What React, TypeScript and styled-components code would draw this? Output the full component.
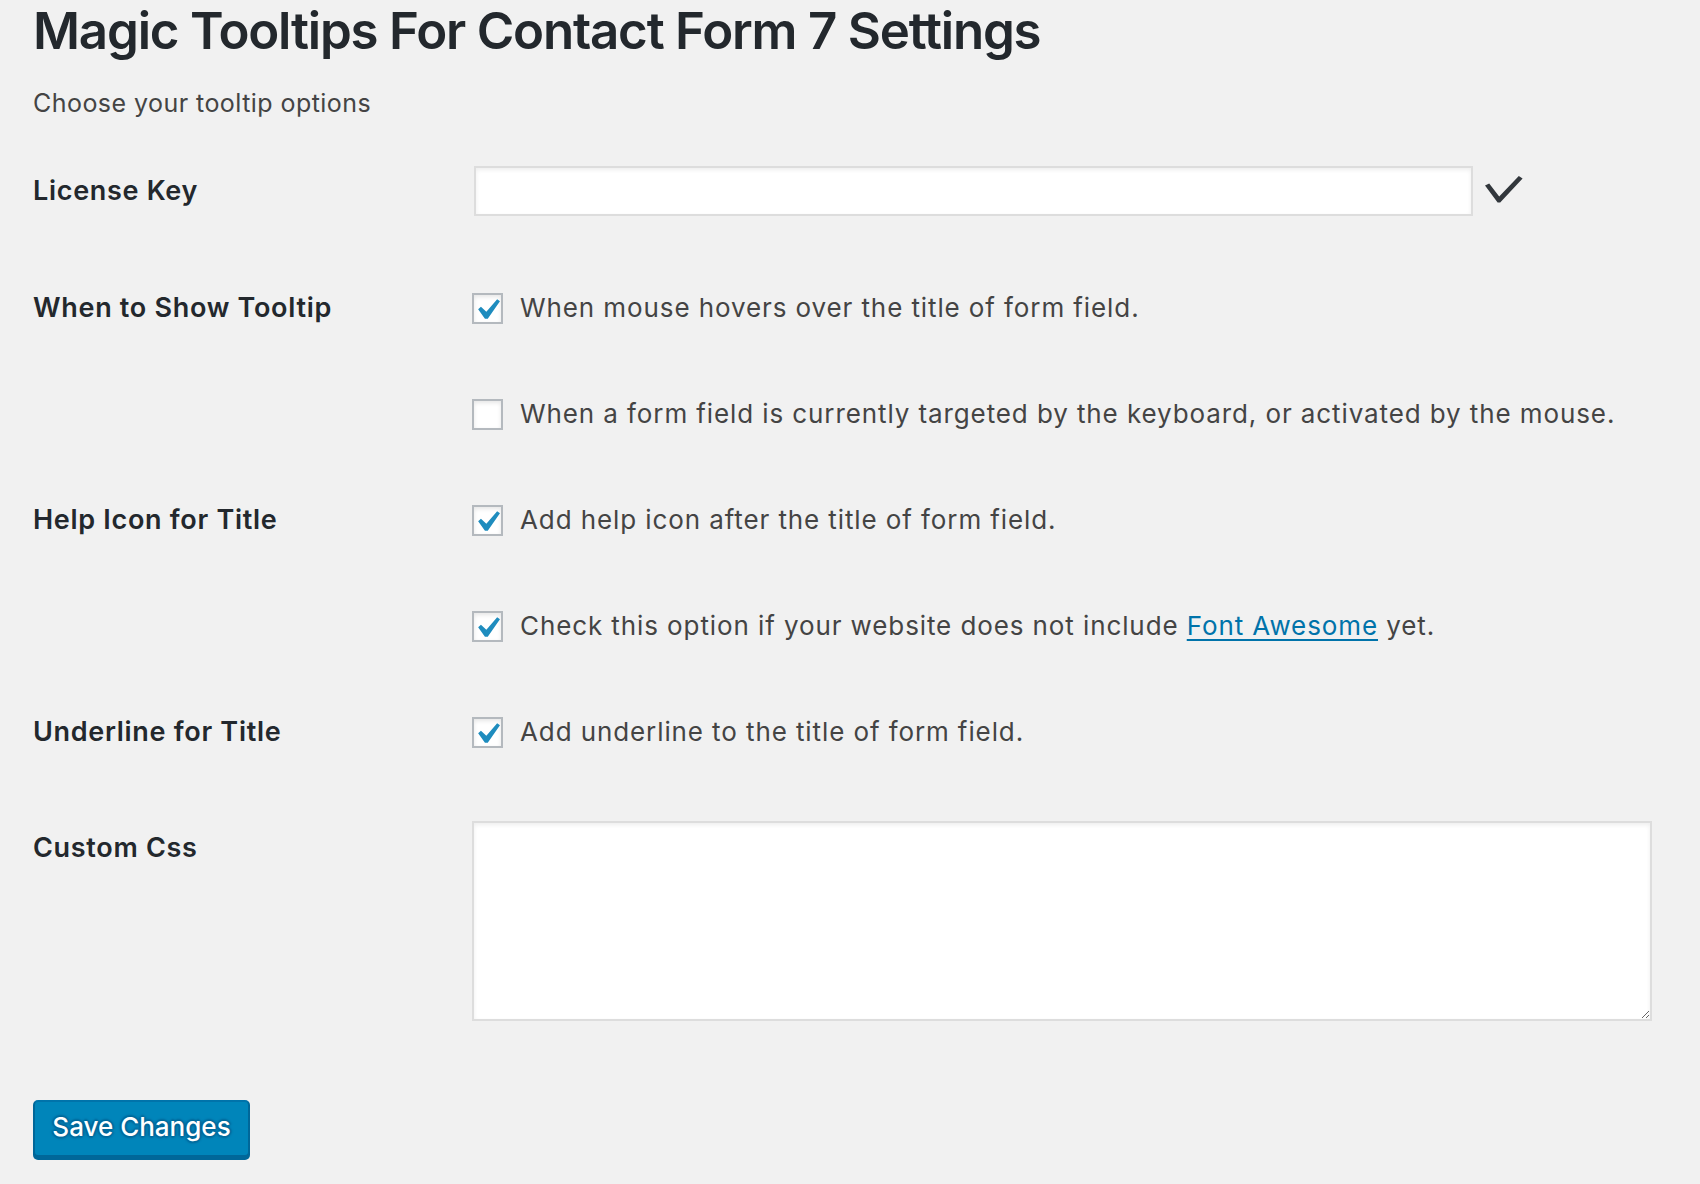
import styled, { createGlobalStyle } from 'styled-components'

// ─── Styles ───────────────────────────────────────────────────────────────────

const GlobalStyle = createGlobalStyle`
  html, body {
    margin: 0;
    padding: 0;
    background: #f1f1f1;
  }
  body {
    font-family: Inter, "Noto Sans", sans-serif;
    color: #444;
  }
`

const Wrap = styled.div`
  padding: 0 48px 40px 33px;
`

const Title = styled.h1`
  margin: 0;
  font-size: 51px;
  line-height: 62px;
  font-weight: 600;
  letter-spacing: -1.2px;
  color: #23282d;
`

const Description = styled.p`
  margin: 21px 0 0;
  font-size: 25px;
  line-height: 40px;
  letter-spacing: 0.45px;
  color: #444;
`

const Row = styled.div<{ $height: number; $top?: number }>`
  display: grid;
  grid-template-columns: 439px 1fr;
  align-items: center;
  height: ${({ $height }) => $height}px;
  margin-top: ${({ $top }) => $top ?? 0}px;
`

const Label = styled.div`
  font-size: 27px;
  line-height: 40px;
  font-weight: 600;
  letter-spacing: 0.7px;
  color: #23282d;
`

const Field = styled.div`
  display: flex;
  align-items: center;
  gap: 12px;
`

const TextInput = styled.input`
  box-sizing: border-box;
  width: 999px;
  height: 50px;
  margin-left: 2px;
  border: 2px solid #ddd;
  background: #fff;
  box-shadow: inset 0 2px 4px rgba(0, 0, 0, 0.07);
  outline: none;
`

const VerifiedIcon = styled.svg`
  width: 38px;
  height: 27px;
  margin-top: -4px;
`

const Option = styled.label`
  display: flex;
  align-items: center;
  gap: 17px;
`

const Checkbox = styled.span<{ $checked: boolean }>`
  box-sizing: border-box;
  width: 31px;
  height: 31px;
  flex-shrink: 0;
  display: flex;
  align-items: center;
  justify-content: center;
  border: 2px solid #b4b9be;
  background: #fff;
  box-shadow: inset 0 2px 4px rgba(0, 0, 0, 0.1);
  overflow: hidden;

  svg {
    flex-shrink: 0;
    margin: 4px 0 0 -1px;
  }
`

const OptionText = styled.span`
  font-size: 26px;
  line-height: 40px;
  letter-spacing: 0.9px;
  color: #444;
`

const Link = styled.a`
  color: #0073aa;
  text-decoration: underline;
  text-underline-offset: 4px;
  text-decoration-thickness: 2px;
`

const AreaRow = styled.div`
  display: grid;
  grid-template-columns: 439px 1fr;
  align-items: start;
  padding-top: 36px;
`

const AreaLabel = styled(Label)`
  margin-top: 7px;
`

const TextArea = styled.textarea`
  box-sizing: border-box;
  width: 1180px;
  height: 200px;
  border: 2px solid #ddd;
  background: #fff;
  box-shadow: inset 0 2px 4px rgba(0, 0, 0, 0.07);
  outline: none;
  resize: both;
`

const SaveButton = styled.button`
  display: block;
  margin-top: 79px;
  box-sizing: border-box;
  width: 217px;
  height: 57px;
  padding: 0 0 4px;
  border: 2px solid #0073aa;
  border-color: #0073aa #006799 #006799;
  border-radius: 5px;
  background: #0085ba;
  box-shadow: 0 3px 0 #006799;
  color: #fff;
  font-family: Inter, "Noto Sans", sans-serif;
  font-size: 26px;
  font-weight: 500;
  text-shadow: 0 -2px 2px #006799, 2px 0 2px #006799, 0 2px 2px #006799, -2px 0 2px #006799;
  cursor: pointer;
`

// ─── Data ─────────────────────────────────────────────────────────────────────

interface OptionRow {
  label?: string
  checked: boolean
  text: React.ReactNode
}

const options: OptionRow[] = [
  { label: 'When to Show Tooltip', checked: true, text: 'When mouse hovers over the title of form field.' },
  { checked: false, text: 'When a form field is currently targeted by the keyboard, or activated by the mouse.' },
  { label: 'Help Icon for Title', checked: true, text: 'Add help icon after the title of form field.' },
  {
    checked: true,
    text: (
      <>
        Check this option if your website does not include <Link href="#">Font Awesome</Link> yet.
      </>
    ),
  },
  { label: 'Underline for Title', checked: true, text: 'Add underline to the title of form field.' },
]

// ─── Component ────────────────────────────────────────────────────────────────

export default function App() {
  return (
    <>
      <GlobalStyle />
      <Wrap>
        <Title>Magic Tooltips For Contact Form 7 Settings</Title>
        <Description>Choose your tooltip options</Description>

        <Row $height={128} $top={4}>
          <Label>License Key</Label>
          <Field>
            <TextInput type="text" />
            <VerifiedIcon viewBox="0 0 38 27">
              <path d="M0 9.5 L4.2 7.6 L14.2 20.6 L33.8 0 L37.6 2.6 L15.2 26.4 L12.6 26.4 Z" fill="#32373c" />
            </VerifiedIcon>
          </Field>
        </Row>

        {options.map((opt, i) => (
          <Row key={i} $height={106}>
            <Label>{opt.label ?? ''}</Label>
            <Option>
              <Checkbox $checked={opt.checked}>
                {opt.checked && (
                  <svg viewBox="0 0 20 20" width="42" height="42">
                    <path d="M14.83 4.89l1.34.94-5.81 8.38H9.02L5.78 9.67l1.34-1.25 2.57 2.4z" fill="#1e8cbe" />
                  </svg>
                )}
              </Checkbox>
              <OptionText>{opt.text}</OptionText>
            </Option>
          </Row>
        ))}

        <AreaRow>
          <AreaLabel>Custom Css</AreaLabel>
          <TextArea />
        </AreaRow>

        <SaveButton type="button">Save Changes</SaveButton>
      </Wrap>
    </>
  )
}
